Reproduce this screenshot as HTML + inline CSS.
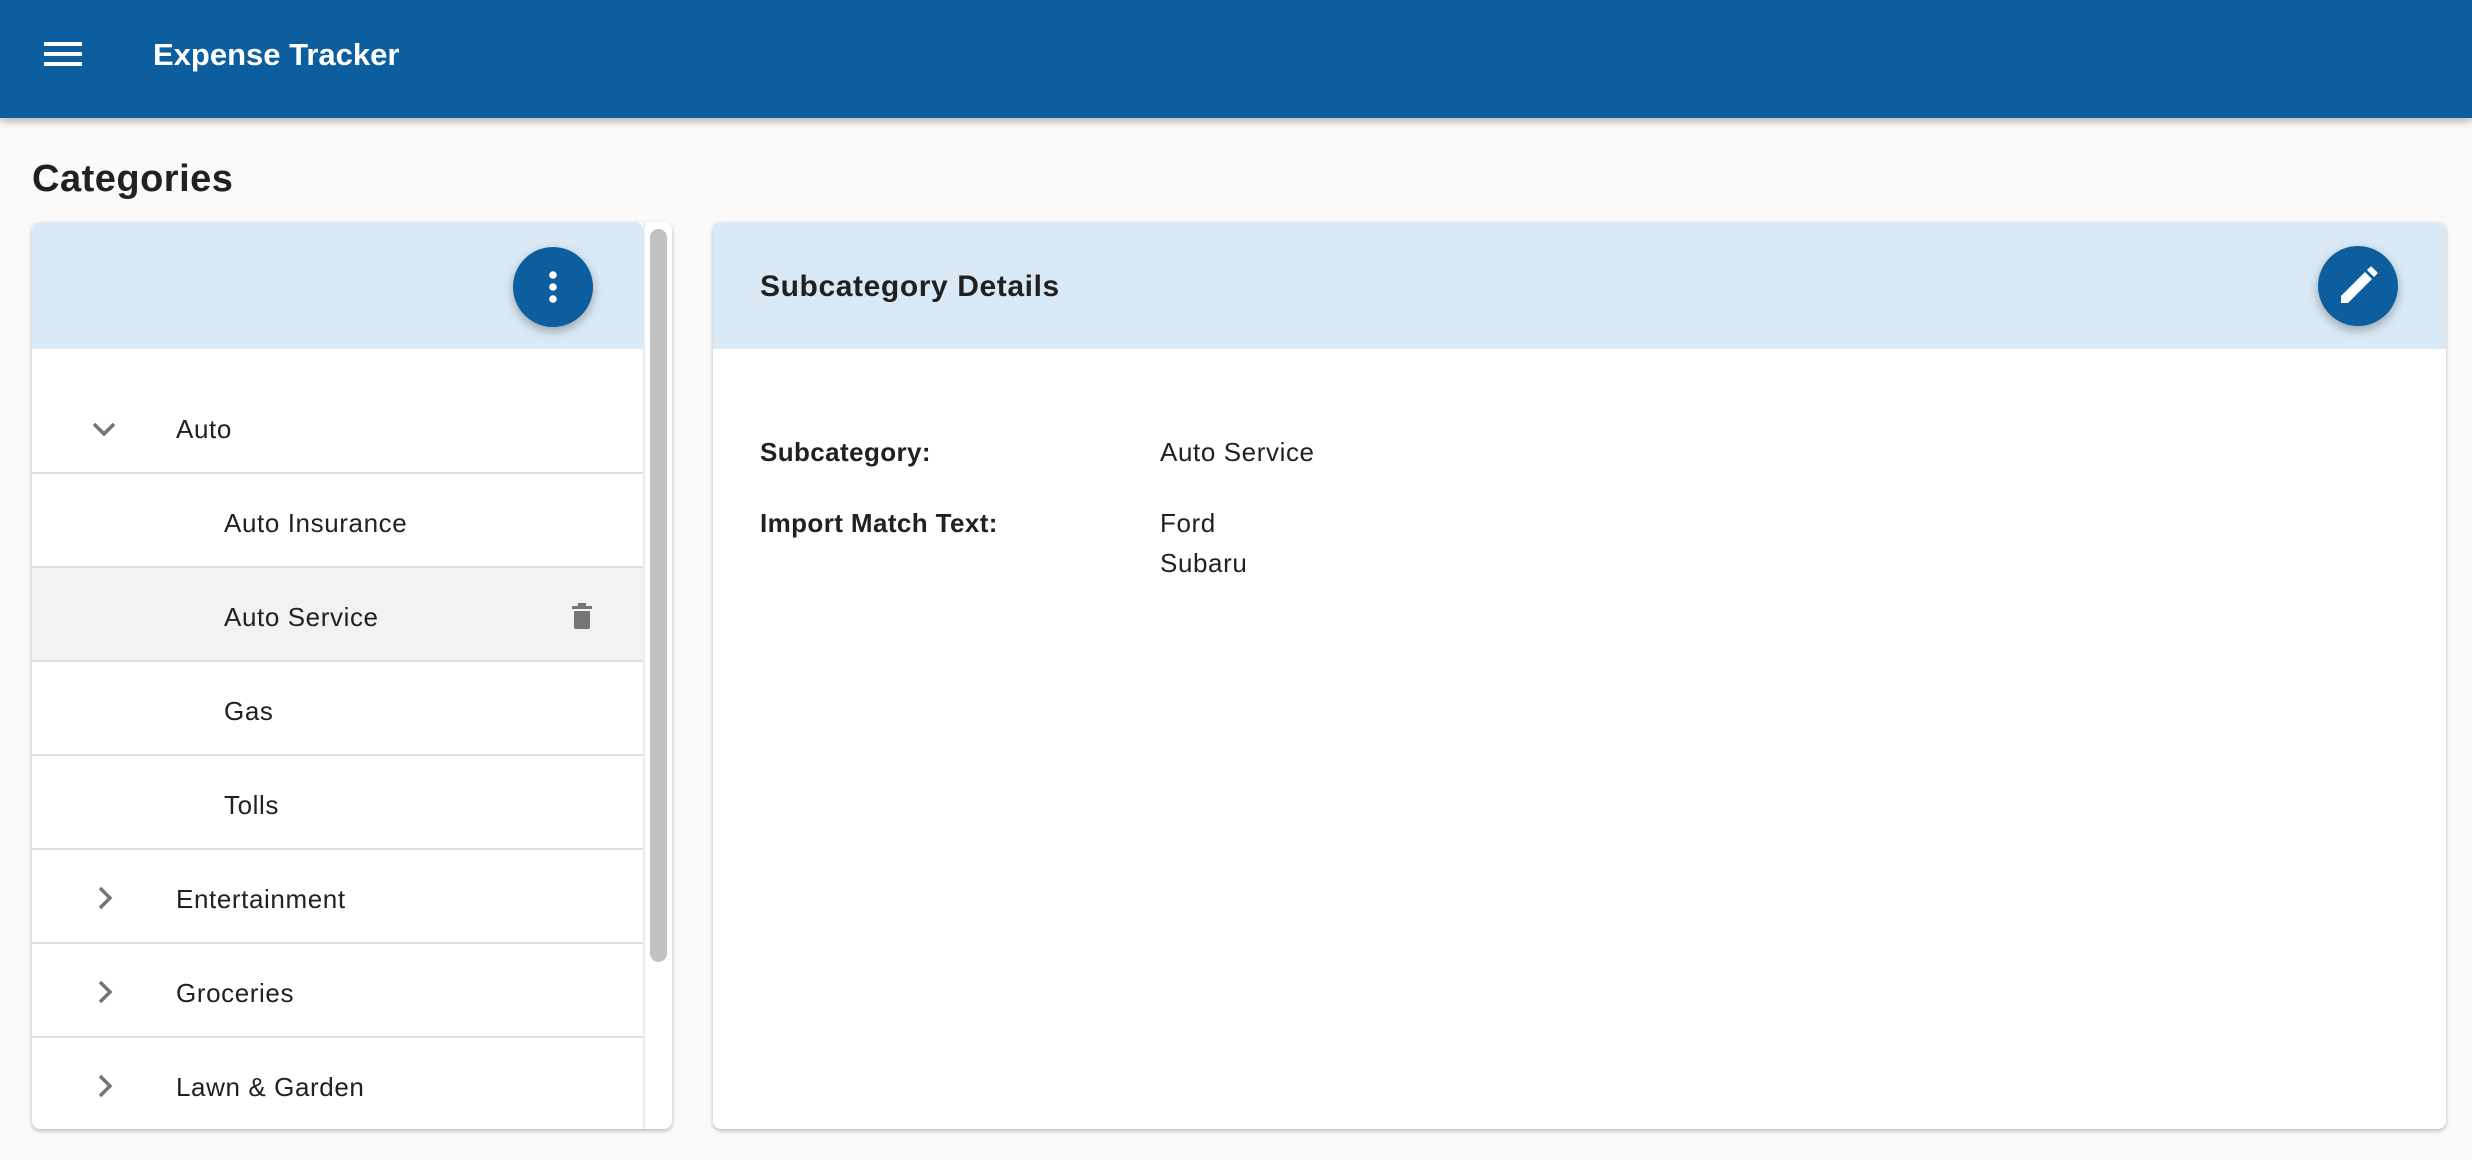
<!DOCTYPE html>
<html><head><style>
*{box-sizing:border-box;margin:0;padding:0}
body{width:2472px;height:1160px;background:#fafafa;font-family:"Liberation Sans",Roboto,sans-serif;color:#212121;position:relative;overflow:hidden}
.bar{position:absolute;left:0;top:0;width:2472px;height:118px;background:#0d5e9e;box-shadow:0 3px 8px rgba(0,0,0,.3)}
.bar .t{position:absolute;left:153px;top:37px;color:#fff;font-size:31px;font-weight:bold}
.h1{position:absolute;left:32px;top:158px;font-size:38px;font-weight:bold;letter-spacing:0.5px}
.card{position:absolute;background:#fff;border-radius:8px;box-shadow:0 2px 4px rgba(0,0,0,.25)}
.hdr{position:absolute;left:0;top:0;height:127px;background:#d9eaf6;border-radius:8px 8px 0 0}
.fab{position:absolute;width:80px;height:80px;border-radius:50%;background:#0d5e9e;box-shadow:0 4px 10px rgba(0,0,0,.3)}
.row{position:absolute;left:0;width:611px;height:94px;border-bottom:2px solid #e0e0e0;font-size:26px;letter-spacing:0.6px;line-height:98px}
.lbl{position:absolute;font-size:26px;font-weight:bold;letter-spacing:0.4px}
.val{position:absolute;font-size:26px;line-height:40px;letter-spacing:0.6px}
</style></head><body>
<div class="bar">
<svg style="position:absolute;left:44px;top:42px" width="38" height="24"><rect y="0" width="38" height="4" fill="#fff"/><rect y="10" width="38" height="4" fill="#fff"/><rect y="20" width="38" height="4" fill="#fff"/></svg>
<div class="t">Expense Tracker</div>
</div>
<div class="h1">Categories</div>

<div class="card" style="left:32px;top:222px;width:640px;height:907px;overflow:hidden">
<div class="hdr" style="width:611px"></div>
<div class="fab" style="left:481px;top:25px"><svg width="80" height="80"><circle cx="40" cy="28" r="3.8" fill="#fff"/><circle cx="40" cy="40" r="3.8" fill="#fff"/><circle cx="40" cy="52" r="3.8" fill="#fff"/></svg></div>
<div style="position:absolute;left:611px;top:0;width:2px;height:907px;background:#ececec"></div>
<div style="position:absolute;left:618px;top:7px;width:17px;height:733px;border-radius:9px;background:#c1c1c1"></div>
<div class="row" style="top:158px"><svg style="position:absolute;left:59px;top:36px" width="26" height="26"><path d="M3 8 L13 18 L23 8" stroke="#757575" stroke-width="3.5" fill="none"/></svg><span style="position:absolute;left:144px">Auto</span></div>
<div class="row" style="top:252px"><span style="position:absolute;left:192px">Auto Insurance</span></div>
<div class="row" style="top:346px;background:#f2f2f2"><span style="position:absolute;left:192px">Auto Service</span><svg style="position:absolute;left:538px;top:35px" width="24" height="26"><rect x="2" y="3" width="20" height="3" fill="#757575"/><rect x="8" y="0" width="8" height="4" fill="#757575"/><path d="M4 8 H20 V24 Q20 26 18 26 H6 Q4 26 4 24Z" fill="#757575"/></svg></div>
<div class="row" style="top:440px"><span style="position:absolute;left:192px">Gas</span></div>
<div class="row" style="top:534px"><span style="position:absolute;left:192px">Tolls</span></div>
<div class="row" style="top:628px"><svg style="position:absolute;left:59px;top:35px" width="26" height="26"><path d="M9 3 L19 13 L9 23" stroke="#757575" stroke-width="3.5" fill="none"/></svg><span style="position:absolute;left:144px">Entertainment</span></div>
<div class="row" style="top:722px"><svg style="position:absolute;left:59px;top:35px" width="26" height="26"><path d="M9 3 L19 13 L9 23" stroke="#757575" stroke-width="3.5" fill="none"/></svg><span style="position:absolute;left:144px">Groceries</span></div>
<div class="row" style="top:816px;border:none"><svg style="position:absolute;left:59px;top:35px" width="26" height="26"><path d="M9 3 L19 13 L9 23" stroke="#757575" stroke-width="3.5" fill="none"/></svg><span style="position:absolute;left:144px">Lawn &amp; Garden</span></div>
</div>

<div class="card" style="left:713px;top:222px;width:1733px;height:907px">
<div class="hdr" style="width:1733px"></div>
<div style="position:absolute;left:47px;top:48px;font-size:30px;font-weight:bold;letter-spacing:0.6px">Subcategory Details</div>
<div class="fab" style="left:1605px;top:24px"><svg width="80" height="80"><path d="M23 57 V50 L47 26 L54 33 L30 57Z M49 24 L52 21 Q53 20 54 21 L59 26 Q60 27 59 28 L56 31Z" fill="#fff"/></svg></div>
<div class="lbl" style="left:47px;top:215px">Subcategory:</div>
<div class="val" style="left:447px;top:210px">Auto Service</div>
<div class="lbl" style="left:47px;top:286px">Import Match Text:</div>
<div class="val" style="left:447px;top:281px">Ford<br>Subaru</div>
</div>
</body></html>
